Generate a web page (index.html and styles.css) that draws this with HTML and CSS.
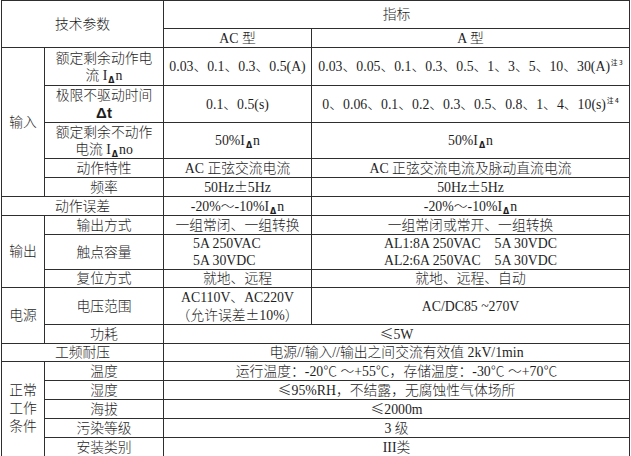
FILE: index.html
```html
<!DOCTYPE html>
<html lang="zh">
<head>
<meta charset="utf-8">
<title>技术参数</title>
<link rel="stylesheet" href="styles.css">
</head>
<body>
<table class="spec">
  <colgroup>
    <col class="c-group">
    <col class="c-param">
    <col class="c-ac">
    <col class="c-a">
  </colgroup>
  <tr class="r28">
    <td colspan="2" rowspan="2">技术参数</td>
    <td colspan="2">指标</td>
  </tr>
  <tr class="r19">
    <td>AC 型</td>
    <td>A 型</td>
  </tr>
  <tr class="r38">
    <td rowspan="5">输入</td>
    <td>额定剩余动作电<br>流 I<span class="sd">Δ</span>n</td>
    <td>0.03、0.1、0.3、0.5(A)</td>
    <td>0.03、0.05、0.1、0.3、0.5、1、3、5、10、30(A)<sup class="note">注 3</sup></td>
  </tr>
  <tr class="r37">
    <td>极限不驱动时间<br><span class="dt">Δt</span></td>
    <td>0.1、0.5(s)</td>
    <td>0、0.06、0.1、0.2、0.3、0.5、0.8、1、4、10(s)<sup class="note">注 4</sup></td>
  </tr>
  <tr class="r36">
    <td>额定剩余不动作<br>电流 I<span class="sd">Δ</span>no</td>
    <td>50%I<span class="sd">Δ</span>n</td>
    <td>50%I<span class="sd">Δ</span>n</td>
  </tr>
  <tr class="r19">
    <td>动作特性</td>
    <td>AC 正弦交流电流</td>
    <td>AC 正弦交流电流及脉动直流电流</td>
  </tr>
  <tr class="r19">
    <td>频率</td>
    <td>50Hz<span class="cjk">±</span>5Hz</td>
    <td>50Hz<span class="cjk">±</span>5Hz</td>
  </tr>
  <tr class="r19">
    <td colspan="2">动作误差</td>
    <td>-20%～-10%I<span class="sd">Δ</span>n</td>
    <td>-20%～-10%I<span class="sd">Δ</span>n</td>
  </tr>
  <tr class="r19">
    <td rowspan="3">输出</td>
    <td>输出方式</td>
    <td>一组常闭、一组转换</td>
    <td>一组常闭或常开、一组转换</td>
  </tr>
  <tr class="r33">
    <td>触点容量</td>
    <td class="left">5A 250VAC<br>5A 30VDC</td>
    <td>AL1:8A 250VAC&nbsp;&nbsp;&nbsp;&nbsp;5A 30VDC<br>AL2:6A 250VAC&nbsp;&nbsp;&nbsp;&nbsp;5A 30VDC</td>
  </tr>
  <tr class="r18">
    <td>复位方式</td>
    <td>就地、远程</td>
    <td>就地、远程、自动</td>
  </tr>
  <tr class="r37">
    <td rowspan="2">电源</td>
    <td>电压范围</td>
    <td>AC110V、AC220V<br>（允许误差<span class="cjk">±</span>10%）</td>
    <td>AC/DC85 ~270V</td>
  </tr>
  <tr class="r19">
    <td>功耗</td>
    <td colspan="2"><span class="cjk">≤</span>5W</td>
  </tr>
  <tr class="r18">
    <td colspan="2">工频耐压</td>
    <td colspan="2">电源//输入//输出之间交流有效值 2kV/1min</td>
  </tr>
  <tr class="r19">
    <td rowspan="5" class="stack">正常<br>工作<br>条件</td>
    <td>温度</td>
    <td colspan="2">运行温度：-20℃ ～+55℃，存储温度：-30℃ ～+70℃</td>
  </tr>
  <tr class="r19">
    <td>湿度</td>
    <td colspan="2"><span class="cjk">≤</span>95%RH，不结露，无腐蚀性气体场所</td>
  </tr>
  <tr class="r19">
    <td>海拔</td>
    <td colspan="2"><span class="cjk">≤</span>2000m</td>
  </tr>
  <tr class="r19">
    <td>污染等级</td>
    <td colspan="2">3 级</td>
  </tr>
  <tr class="r19">
    <td>安装类别</td>
    <td colspan="2">III类</td>
  </tr>
</table>
</body>
</html>
```

FILE: styles.css
```css
html, body {
  margin: 0;
  padding: 0;
  background: #ffffff;
}

body {
  padding: 0 0 0 1px;
}

.spec {
  border-collapse: collapse;
  table-layout: fixed;
  width: 628px;
  font-family: "Liberation Serif", "Noto Sans CJK SC", serif;
  font-size: 13.8px;
  font-weight: 300;
  line-height: 17px;
  color: #1e1e1e;
}

.c-group { width: 43px; }
.c-param { width: 119px; }
.c-ac { width: 148px; }
.c-a { width: 318px; }

.spec td {
  border: 1px solid #2e2e2e;
  padding: 0;
  text-align: center;
  vertical-align: middle;
  white-space: nowrap;
}

.spec td.left {
  text-align: left;
  padding-left: 29px;
}

.spec td.stack {
  line-height: 18px;
}

.r18 { height: 18px; }
.r19 { height: 19px; }
.r28 { height: 28px; }
.r33 { height: 33px; }
.r36 { height: 36px; }
.r37 { height: 37px; }
.r38 { height: 38px; }

.cjk {
  font-family: "Noto Sans CJK SC", sans-serif;
}

.sd {
  font-family: "DejaVu Sans", sans-serif;
  font-weight: bold;
  font-size: 8px;
  vertical-align: -3px;
  line-height: 0;
  margin: 0 1px;
}

.dt {
  font-family: "Liberation Sans", sans-serif;
  font-weight: bold;
  font-size: 15px;
}

.note {
  font-family: "Noto Sans CJK SC", sans-serif;
  font-weight: 500;
  font-size: 6.5px;
  line-height: 0;
  vertical-align: 6px;
  margin-left: 1px;
}
```
